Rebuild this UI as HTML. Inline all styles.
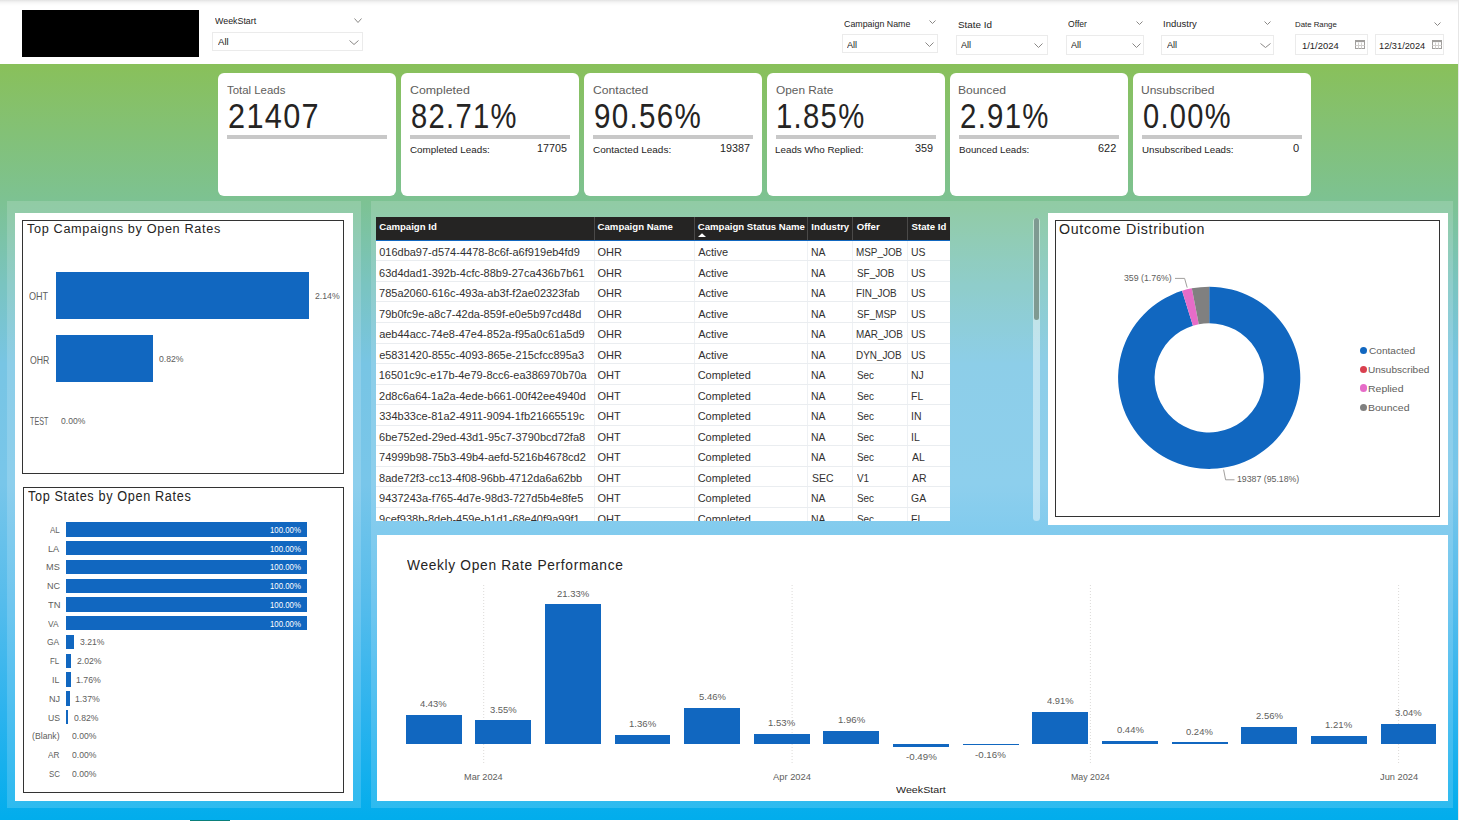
<!DOCTYPE html><html><head><meta charset="utf-8"><style>
*{margin:0;padding:0;box-sizing:border-box}
html,body{width:1459px;height:821px;overflow:hidden;background:#fff}
body{position:relative;font-family:"Liberation Sans",sans-serif;color:#252423}
div,svg{position:absolute}
.t{white-space:nowrap;line-height:1;transform-origin:0 0}
</style></head><body>
<div style="left:0.00px;top:0.00px;width:1459.00px;height:64.00px;background:#fff"></div>
<div style="left:0.00px;top:0.00px;width:1459.00px;height:6.00px;background:linear-gradient(#e2e2e2 0px,#f3f3f3 2px,#fbfbfb 4px,#fff 6px)"></div>
<div style="left:0.00px;top:64.00px;width:1457.60px;height:755.70px;background:linear-gradient(180deg,#89c05a 0px,#7dc292 136px,#7ac4c0 220px,#78c5e4 300px,#78c6ea 420px,#55bcec 540px,#2cb3ee 650px,#02adec 755px)"></div>
<div style="left:1457.60px;top:0.00px;width:1.40px;height:821.00px;background:#e6e6e6"></div>
<div style="left:0.00px;top:819.70px;width:1459.00px;height:1.30px;background:#fff"></div>
<div style="left:190.00px;top:819.70px;width:40.00px;height:1.30px;background:#0a7f7a"></div>
<div style="left:22.00px;top:10.00px;width:177.00px;height:47.00px;background:#000"></div>
<div class="t" style="left:215.16px;top:17.22px;font-size:9.30px;color:#252423;transform:scaleX(0.9535);">WeekStart</div>
<svg style="left:353.5px;top:18px" width="8" height="5" viewBox="0 0 8 5"><polyline points="0.5,0.5 4.0,4.5 7.5,0.5" fill="none" stroke="#8a8886" stroke-width="1"/></svg>
<div style="left:212.40px;top:32.00px;width:151.00px;height:19.40px;border:1px solid #ebebeb;background:#fff"></div>
<div class="t" style="left:217.68px;top:38.49px;font-size:8.87px;color:#252423;transform:scaleX(1.0819);">All</div>
<svg style="left:349px;top:40px" width="10" height="5" viewBox="0 0 10 5"><polyline points="0.5,0.5 5.0,4.5 9.5,0.5" fill="none" stroke="#8a8886" stroke-width="1"/></svg>
<div class="t" style="left:843.55px;top:19.95px;font-size:9.16px;color:#252423;transform:scaleX(0.9656);">Campaign Name</div>
<svg style="left:929px;top:20px" width="7" height="4" viewBox="0 0 7 4"><polyline points="0.5,0.5 3.5,3.5 6.5,0.5" fill="none" stroke="#8a8886" stroke-width="1"/></svg>
<div style="left:841.50px;top:34.00px;width:96.00px;height:19.20px;border:1px solid #ebebeb;background:#fff"></div>
<div class="t" style="left:846.98px;top:40.66px;font-size:8.43px;color:#252423;transform:scaleX(1.0810);">All</div>
<svg style="left:924.5px;top:42px" width="9" height="5" viewBox="0 0 9 5"><polyline points="0.5,0.5 4.5,4.5 8.5,0.5" fill="none" stroke="#8a8886" stroke-width="1"/></svg>
<div class="t" style="left:957.95px;top:21.06px;font-size:8.43px;color:#252423;transform:scaleX(1.1731);">State Id</div>
<div style="left:955.80px;top:34.70px;width:92.00px;height:20.00px;border:1px solid #ebebeb;background:#fff"></div>
<div class="t" style="left:960.68px;top:40.96px;font-size:8.43px;color:#252423;transform:scaleX(1.0810);">All</div>
<svg style="left:1034px;top:42.5px" width="9" height="5" viewBox="0 0 9 5"><polyline points="0.5,0.5 4.5,4.5 8.5,0.5" fill="none" stroke="#8a8886" stroke-width="1"/></svg>
<div class="t" style="left:1067.59px;top:21.11px;font-size:8.14px;color:#252423;transform:scaleX(1.0529);">Offer</div>
<svg style="left:1135.6px;top:21px" width="7" height="4" viewBox="0 0 7 4"><polyline points="0.5,0.5 3.5,3.5 6.5,0.5" fill="none" stroke="#8a8886" stroke-width="1"/></svg>
<div style="left:1065.90px;top:35.40px;width:78.10px;height:19.30px;border:1px solid #ebebeb;background:#fff"></div>
<div class="t" style="left:1070.78px;top:40.96px;font-size:8.43px;color:#252423;transform:scaleX(1.0810);">All</div>
<svg style="left:1131.7px;top:42.5px" width="9" height="5" viewBox="0 0 9 5"><polyline points="0.5,0.5 4.5,4.5 8.5,0.5" fill="none" stroke="#8a8886" stroke-width="1"/></svg>
<div class="t" style="left:1163.12px;top:21.11px;font-size:8.14px;color:#252423;transform:scaleX(1.1708);">Industry</div>
<svg style="left:1264.3px;top:21px" width="7" height="4" viewBox="0 0 7 4"><polyline points="0.5,0.5 3.5,3.5 6.5,0.5" fill="none" stroke="#8a8886" stroke-width="1"/></svg>
<div style="left:1161.00px;top:35.40px;width:112.60px;height:19.30px;border:1px solid #ebebeb;background:#fff"></div>
<div class="t" style="left:1166.88px;top:40.96px;font-size:8.43px;color:#252423;transform:scaleX(1.0810);">All</div>
<svg style="left:1260px;top:42.5px" width="11" height="5" viewBox="0 0 11 5"><polyline points="0.5,0.5 5.5,4.5 10.5,0.5" fill="none" stroke="#8a8886" stroke-width="1"/></svg>
<div class="t" style="left:1294.86px;top:21.23px;font-size:7.99px;color:#252423;transform:scaleX(0.9795);">Date Range</div>
<svg style="left:1434px;top:22px" width="7" height="4" viewBox="0 0 7 4"><polyline points="0.5,0.5 3.5,3.5 6.5,0.5" fill="none" stroke="#8a8886" stroke-width="1"/></svg>
<div style="left:1294.80px;top:33.90px;width:73.10px;height:21.40px;border:1px solid #ebebeb;background:#fff"></div>
<div style="left:1375.00px;top:33.90px;width:69.20px;height:21.40px;border:1px solid #ebebeb;background:#fff"></div>
<div class="t" style="left:1301.58px;top:40.85px;font-size:9.74px;color:#252423;transform:scaleX(0.9680);">1/1/2024</div>
<div class="t" style="left:1379.10px;top:40.85px;font-size:9.74px;color:#252423;transform:scaleX(0.9494);">12/31/2024</div>
<svg style="left:1354.5px;top:40px" width="10" height="9" viewBox="0 0 10 9"><rect x="0.5" y="0.5" width="9" height="8" fill="none" stroke="#a19f9d" stroke-width="1"/><rect x="0.5" y="0.5" width="9" height="1.6" fill="#a19f9d"/><line x1="3.5" y1="2.5" x2="3.5" y2="8.5" stroke="#d2d0ce"/><line x1="6.5" y1="2.5" x2="6.5" y2="8.5" stroke="#d2d0ce"/><line x1="0.5" y1="5.5" x2="9.5" y2="5.5" stroke="#d2d0ce"/></svg>
<svg style="left:1432.3px;top:40px" width="10" height="9" viewBox="0 0 10 9"><rect x="0.5" y="0.5" width="9" height="8" fill="none" stroke="#a19f9d" stroke-width="1"/><rect x="0.5" y="0.5" width="9" height="1.6" fill="#a19f9d"/><line x1="3.5" y1="2.5" x2="3.5" y2="8.5" stroke="#d2d0ce"/><line x1="6.5" y1="2.5" x2="6.5" y2="8.5" stroke="#d2d0ce"/><line x1="0.5" y1="5.5" x2="9.5" y2="5.5" stroke="#d2d0ce"/></svg>
<div style="left:218.00px;top:73.00px;width:177.50px;height:122.50px;background:#fff;border-radius:6px"></div>
<div class="t" style="left:227.04px;top:83.73px;font-size:11.77px;color:#605e5c;transform:scaleX(0.9699);">Total Leads</div>
<div class="t" style="left:227.76px;top:99.26px;font-size:34.30px;color:#252423;transform:scaleX(0.8945);letter-spacing:1.5px;">21407</div>
<div style="left:227.00px;top:135.00px;width:160.00px;height:4.00px;background:#c8c8c8"></div>
<div style="left:401.00px;top:73.00px;width:177.50px;height:122.50px;background:#fff;border-radius:6px"></div>
<div class="t" style="left:409.67px;top:83.73px;font-size:11.77px;color:#605e5c;transform:scaleX(1.0508);">Completed</div>
<div class="t" style="left:411.03px;top:99.26px;font-size:34.30px;color:#252423;transform:scaleX(0.8520);letter-spacing:1.5px;">82.71%</div>
<div style="left:410.00px;top:135.00px;width:160.00px;height:4.00px;background:#c8c8c8"></div>
<div class="t" style="left:409.80px;top:145.89px;font-size:8.87px;color:#252423;transform:scaleX(1.1103);">Completed Leads:</div>
<div class="t" style="left:537.08px;top:143.64px;font-size:10.47px;color:#252423;transform:scaleX(1.0264);">17705</div>
<div style="left:584.00px;top:73.00px;width:177.50px;height:122.50px;background:#fff;border-radius:6px"></div>
<div class="t" style="left:592.68px;top:83.73px;font-size:11.77px;color:#605e5c;transform:scaleX(1.0323);">Contacted</div>
<div class="t" style="left:593.91px;top:99.26px;font-size:34.30px;color:#252423;transform:scaleX(0.8636);letter-spacing:1.5px;">90.56%</div>
<div style="left:593.00px;top:135.00px;width:160.00px;height:4.00px;background:#c8c8c8"></div>
<div class="t" style="left:592.79px;top:145.89px;font-size:8.87px;color:#252423;transform:scaleX(1.1254);">Contacted Leads:</div>
<div class="t" style="left:720.08px;top:143.64px;font-size:10.47px;color:#252423;transform:scaleX(1.0296);">19387</div>
<div style="left:767.00px;top:73.00px;width:177.50px;height:122.50px;background:#fff;border-radius:6px"></div>
<div class="t" style="left:775.74px;top:83.73px;font-size:11.77px;color:#605e5c;transform:scaleX(1.0079);">Open Rate</div>
<div class="t" style="left:776.07px;top:99.26px;font-size:34.30px;color:#252423;transform:scaleX(0.8549);letter-spacing:1.5px;">1.85%</div>
<div style="left:776.00px;top:135.00px;width:160.00px;height:4.00px;background:#c8c8c8"></div>
<div class="t" style="left:775.49px;top:145.89px;font-size:8.87px;color:#252423;transform:scaleX(1.1085);">Leads Who Replied:</div>
<div class="t" style="left:914.89px;top:143.64px;font-size:10.47px;color:#252423;transform:scaleX(1.0382);">359</div>
<div style="left:950.00px;top:73.00px;width:177.50px;height:122.50px;background:#fff;border-radius:6px"></div>
<div class="t" style="left:958.30px;top:83.73px;font-size:11.77px;color:#605e5c;transform:scaleX(1.0323);">Bounced</div>
<div class="t" style="left:959.82px;top:99.26px;font-size:34.30px;color:#252423;transform:scaleX(0.8573);letter-spacing:1.5px;">2.91%</div>
<div style="left:959.00px;top:135.00px;width:160.00px;height:4.00px;background:#c8c8c8"></div>
<div class="t" style="left:958.50px;top:145.89px;font-size:8.87px;color:#252423;transform:scaleX(1.0967);">Bounced Leads:</div>
<div class="t" style="left:1097.85px;top:143.64px;font-size:10.47px;color:#252423;transform:scaleX(1.0425);">622</div>
<div style="left:1133.00px;top:73.00px;width:177.50px;height:122.50px;background:#fff;border-radius:6px"></div>
<div class="t" style="left:1141.37px;top:83.73px;font-size:11.77px;color:#605e5c;transform:scaleX(1.0211);">Unsubscribed</div>
<div class="t" style="left:1143.16px;top:99.26px;font-size:34.30px;color:#252423;transform:scaleX(0.8481);letter-spacing:1.5px;">0.00%</div>
<div style="left:1142.00px;top:135.00px;width:160.00px;height:4.00px;background:#c8c8c8"></div>
<div class="t" style="left:1141.55px;top:145.89px;font-size:8.87px;color:#252423;transform:scaleX(1.1002);">Unsubscribed Leads:</div>
<div class="t" style="left:1292.77px;top:143.64px;font-size:10.47px;color:#252423;transform:scaleX(1.0594);">0</div>
<div style="left:7.00px;top:200.70px;width:354.00px;height:607.30px;background:rgba(255,255,255,0.16)"></div>
<div style="left:15.00px;top:212.60px;width:338.00px;height:588.10px;background:#fff"></div>
<div style="left:370.70px;top:200.70px;width:677.10px;height:326.30px;background:rgba(255,255,255,0.16)"></div>
<div style="left:1047.80px;top:200.70px;width:405.20px;height:326.30px;background:rgba(255,255,255,0.16)"></div>
<div style="left:1047.80px;top:212.80px;width:400.50px;height:312.00px;background:#fff"></div>
<div style="left:370.70px;top:527.00px;width:1082.50px;height:281.00px;background:rgba(255,255,255,0.16)"></div>
<div style="left:376.90px;top:534.70px;width:1071.40px;height:266.00px;background:#fff"></div>
<div style="left:22.00px;top:219.90px;width:322.00px;height:254.10px;border:1px solid #333"></div>
<div class="t" style="left:26.81px;top:222.33px;font-size:13.66px;color:#252423;transform:scaleX(0.9292);letter-spacing:0.7px;">Top Campaigns by Open Rates</div>
<div style="left:55.50px;top:272.30px;width:253.70px;height:47.20px;background:#1167c0"></div>
<div style="left:55.50px;top:335.00px;width:97.30px;height:46.60px;background:#1167c0"></div>
<div class="t" style="left:29.37px;top:291.64px;font-size:10.47px;color:#605e5c;transform:scaleX(0.8663);">OHT</div>
<div class="t" style="left:29.59px;top:354.52px;font-size:10.61px;color:#605e5c;transform:scaleX(0.8192);">OHR</div>
<div class="t" style="left:30.14px;top:416.02px;font-size:11.19px;color:#605e5c;transform:scaleX(0.6407);">TEST</div>
<div class="t" style="left:315.26px;top:290.73px;font-size:9.88px;color:#605e5c;transform:scaleX(0.8795);">2.14%</div>
<div class="t" style="left:159.46px;top:353.73px;font-size:9.88px;color:#605e5c;transform:scaleX(0.8759);">0.82%</div>
<div class="t" style="left:61.26px;top:415.73px;font-size:9.88px;color:#605e5c;transform:scaleX(0.8686);">0.00%</div>
<div style="left:23.10px;top:487.20px;width:321.20px;height:305.60px;border:1px solid #333"></div>
<div class="t" style="left:27.92px;top:489.51px;font-size:13.81px;color:#252423;transform:scaleX(0.9185);letter-spacing:0.7px;">Top States by Open Rates</div>
<div style="left:66.30px;top:522.20px;width:240.60px;height:14.40px;background:#1167c0"></div>
<div class="t" style="left:49.78px;top:524.75px;font-size:9.45px;color:#605e5c;transform:scaleX(0.8464);">AL</div>
<div class="t" style="left:270.10px;top:524.75px;font-size:9.45px;color:#fff;transform:scaleX(0.8278);">100.00%</div>
<div style="left:66.30px;top:540.98px;width:240.60px;height:14.40px;background:#1167c0"></div>
<div class="t" style="left:48.04px;top:543.53px;font-size:9.45px;color:#605e5c;transform:scaleX(0.9756);">LA</div>
<div class="t" style="left:270.10px;top:543.53px;font-size:9.45px;color:#fff;transform:scaleX(0.8278);">100.00%</div>
<div style="left:66.30px;top:559.76px;width:240.60px;height:14.40px;background:#1167c0"></div>
<div class="t" style="left:45.95px;top:562.31px;font-size:9.45px;color:#605e5c;transform:scaleX(0.9720);">MS</div>
<div class="t" style="left:270.10px;top:562.31px;font-size:9.45px;color:#fff;transform:scaleX(0.8278);">100.00%</div>
<div style="left:66.30px;top:578.54px;width:240.60px;height:14.40px;background:#1167c0"></div>
<div class="t" style="left:46.56px;top:581.09px;font-size:9.45px;color:#605e5c;transform:scaleX(0.9592);">NC</div>
<div class="t" style="left:270.10px;top:581.09px;font-size:9.45px;color:#fff;transform:scaleX(0.8278);">100.00%</div>
<div style="left:66.30px;top:597.32px;width:240.60px;height:14.40px;background:#1167c0"></div>
<div class="t" style="left:47.59px;top:599.87px;font-size:9.45px;color:#605e5c;transform:scaleX(0.9904);">TN</div>
<div class="t" style="left:270.10px;top:599.87px;font-size:9.45px;color:#fff;transform:scaleX(0.8278);">100.00%</div>
<div style="left:66.30px;top:616.10px;width:240.60px;height:14.40px;background:#1167c0"></div>
<div class="t" style="left:48.16px;top:618.65px;font-size:9.45px;color:#605e5c;transform:scaleX(0.8850);">VA</div>
<div class="t" style="left:270.10px;top:618.65px;font-size:9.45px;color:#fff;transform:scaleX(0.8278);">100.00%</div>
<div style="left:66.30px;top:634.88px;width:7.72px;height:14.40px;background:#1167c0"></div>
<div class="t" style="left:47.07px;top:637.43px;font-size:9.45px;color:#605e5c;transform:scaleX(0.8969);">GA</div>
<div class="t" style="left:79.70px;top:637.43px;font-size:9.45px;color:#605e5c;transform:scaleX(0.9122);">3.21%</div>
<div style="left:66.30px;top:653.66px;width:4.86px;height:14.40px;background:#1167c0"></div>
<div class="t" style="left:50.35px;top:656.21px;font-size:9.45px;color:#605e5c;transform:scaleX(0.8353);">FL</div>
<div class="t" style="left:76.72px;top:656.21px;font-size:9.45px;color:#605e5c;transform:scaleX(0.9162);">2.02%</div>
<div style="left:66.30px;top:672.44px;width:4.23px;height:14.40px;background:#1167c0"></div>
<div class="t" style="left:52.29px;top:674.99px;font-size:9.45px;color:#605e5c;transform:scaleX(0.9263);">IL</div>
<div class="t" style="left:75.87px;top:674.99px;font-size:9.45px;color:#605e5c;transform:scaleX(0.9249);">1.76%</div>
<div style="left:66.30px;top:691.22px;width:3.30px;height:14.40px;background:#1167c0"></div>
<div class="t" style="left:48.85px;top:693.77px;font-size:9.45px;color:#605e5c;transform:scaleX(0.9632);">NJ</div>
<div class="t" style="left:74.93px;top:693.77px;font-size:9.45px;color:#605e5c;transform:scaleX(0.9249);">1.37%</div>
<div style="left:66.30px;top:710.00px;width:2.20px;height:14.40px;background:#1167c0"></div>
<div class="t" style="left:47.63px;top:712.55px;font-size:9.45px;color:#605e5c;transform:scaleX(0.9196);">US</div>
<div class="t" style="left:74.16px;top:712.55px;font-size:9.45px;color:#605e5c;transform:scaleX(0.9125);">0.82%</div>
<div class="t" style="left:32.26px;top:731.33px;font-size:9.45px;color:#605e5c;transform:scaleX(0.9216);">(Blank)</div>
<div class="t" style="left:71.96px;top:731.33px;font-size:9.45px;color:#605e5c;transform:scaleX(0.9125);">0.00%</div>
<div class="t" style="left:48.28px;top:750.11px;font-size:9.45px;color:#605e5c;transform:scaleX(0.8684);">AR</div>
<div class="t" style="left:71.96px;top:750.11px;font-size:9.45px;color:#605e5c;transform:scaleX(0.9125);">0.00%</div>
<div class="t" style="left:48.64px;top:768.89px;font-size:9.45px;color:#605e5c;transform:scaleX(0.8350);">SC</div>
<div class="t" style="left:71.96px;top:768.89px;font-size:9.45px;color:#605e5c;transform:scaleX(0.9125);">0.00%</div>
<div style="left:375.80px;top:216.90px;width:574.50px;height:22.80px;background:#252423"></div>
<div style="left:375.80px;top:239.70px;width:574.50px;height:1.20px;background:#1167c0"></div>
<div style="left:375.80px;top:240.90px;width:574.50px;height:280.20px;background:#fff"></div>
<div style="left:594.20px;top:216.90px;width:1.00px;height:22.80px;background:#4a4948"></div>
<div style="left:594.20px;top:240.90px;width:1.00px;height:280.20px;background:#eef1f4"></div>
<div style="left:694.40px;top:216.90px;width:1.00px;height:22.80px;background:#4a4948"></div>
<div style="left:694.40px;top:240.90px;width:1.00px;height:280.20px;background:#eef1f4"></div>
<div style="left:807.20px;top:216.90px;width:1.00px;height:22.80px;background:#4a4948"></div>
<div style="left:807.20px;top:240.90px;width:1.00px;height:280.20px;background:#eef1f4"></div>
<div style="left:852.30px;top:216.90px;width:1.00px;height:22.80px;background:#4a4948"></div>
<div style="left:852.30px;top:240.90px;width:1.00px;height:280.20px;background:#eef1f4"></div>
<div style="left:907.10px;top:216.90px;width:1.00px;height:22.80px;background:#4a4948"></div>
<div style="left:907.10px;top:240.90px;width:1.00px;height:280.20px;background:#eef1f4"></div>
<div class="t" style="left:379.21px;top:221.87px;font-size:9.60px;color:#fff;font-weight:bold;">Campaign Id</div>
<div class="t" style="left:597.61px;top:221.87px;font-size:9.60px;color:#fff;font-weight:bold;">Campaign Name</div>
<div class="t" style="left:697.81px;top:221.87px;font-size:9.60px;color:#fff;font-weight:bold;">Campaign Status Name</div>
<div class="t" style="left:811.36px;top:221.87px;font-size:9.60px;color:#fff;font-weight:bold;">Industry</div>
<div class="t" style="left:856.71px;top:221.87px;font-size:9.60px;color:#fff;font-weight:bold;">Offer</div>
<div class="t" style="left:911.62px;top:221.87px;font-size:9.60px;color:#fff;font-weight:bold;">State Id</div>
<svg style="left:698px;top:233px" width="8" height="4" viewBox="0 0 8 4"><polygon points="0,4 4,0.3 8,4" fill="#fff"/></svg>
<div style="left:375.80px;top:260.40px;width:574.50px;height:1.00px;background:#eaedf0"></div>
<div style="left:375.80px;top:280.93px;width:574.50px;height:1.00px;background:#eaedf0"></div>
<div style="left:375.80px;top:301.46px;width:574.50px;height:1.00px;background:#eaedf0"></div>
<div style="left:375.80px;top:321.99px;width:574.50px;height:1.00px;background:#eaedf0"></div>
<div style="left:375.80px;top:342.52px;width:574.50px;height:1.00px;background:#eaedf0"></div>
<div style="left:375.80px;top:363.05px;width:574.50px;height:1.00px;background:#eaedf0"></div>
<div style="left:375.80px;top:383.58px;width:574.50px;height:1.00px;background:#eaedf0"></div>
<div style="left:375.80px;top:404.11px;width:574.50px;height:1.00px;background:#eaedf0"></div>
<div style="left:375.80px;top:424.64px;width:574.50px;height:1.00px;background:#eaedf0"></div>
<div style="left:375.80px;top:445.17px;width:574.50px;height:1.00px;background:#eaedf0"></div>
<div style="left:375.80px;top:465.70px;width:574.50px;height:1.00px;background:#eaedf0"></div>
<div style="left:375.80px;top:486.23px;width:574.50px;height:1.00px;background:#eaedf0"></div>
<div style="left:375.80px;top:506.76px;width:574.50px;height:1.00px;background:#eaedf0"></div>
<div style="left:375.8px;top:240.9px;width:574.5px;height:280.2px;overflow:hidden">
<div class="t" style="left:3.37px;top:6.19px;font-size:11px;color:#323130;">016dba97-d574-4478-8c6f-a6f919eb4fd9</div>
<div class="t" style="left:221.68px;top:6.19px;font-size:11px;color:#323130;">OHR</div>
<div class="t" style="left:322.38px;top:6.19px;font-size:11px;color:#323130;">Active</div>
<div class="t" style="left:435.34px;top:6.19px;font-size:11px;color:#323130;transform:scaleX(0.95);">NA</div>
<div class="t" style="left:480.49px;top:6.19px;font-size:11px;color:#323130;transform:scaleX(0.9);">MSP_JOB</div>
<div class="t" style="left:535.29px;top:6.19px;font-size:11px;color:#323130;transform:scaleX(0.95);">US</div>
<div class="t" style="left:3.24px;top:26.72px;font-size:11px;color:#323130;">63d4dad1-392b-4cfc-88b9-27ca436b7b61</div>
<div class="t" style="left:221.68px;top:26.72px;font-size:11px;color:#323130;">OHR</div>
<div class="t" style="left:322.38px;top:26.72px;font-size:11px;color:#323130;">Active</div>
<div class="t" style="left:435.34px;top:26.72px;font-size:11px;color:#323130;transform:scaleX(0.95);">NA</div>
<div class="t" style="left:480.85px;top:26.72px;font-size:11px;color:#323130;transform:scaleX(0.9);">SF_JOB</div>
<div class="t" style="left:535.29px;top:26.72px;font-size:11px;color:#323130;transform:scaleX(0.95);">US</div>
<div class="t" style="left:3.24px;top:47.25px;font-size:11px;color:#323130;">785a2060-616c-493a-ab3f-f2ae02323fab</div>
<div class="t" style="left:221.68px;top:47.25px;font-size:11px;color:#323130;">OHR</div>
<div class="t" style="left:322.38px;top:47.25px;font-size:11px;color:#323130;">Active</div>
<div class="t" style="left:435.34px;top:47.25px;font-size:11px;color:#323130;transform:scaleX(0.95);">NA</div>
<div class="t" style="left:480.49px;top:47.25px;font-size:11px;color:#323130;transform:scaleX(0.9);">FIN_JOB</div>
<div class="t" style="left:535.29px;top:47.25px;font-size:11px;color:#323130;transform:scaleX(0.95);">US</div>
<div class="t" style="left:3.24px;top:67.78px;font-size:11px;color:#323130;">79b0fc9e-a8c7-42da-859f-e0e5b97cd48d</div>
<div class="t" style="left:221.68px;top:67.78px;font-size:11px;color:#323130;">OHR</div>
<div class="t" style="left:322.38px;top:67.78px;font-size:11px;color:#323130;">Active</div>
<div class="t" style="left:435.34px;top:67.78px;font-size:11px;color:#323130;transform:scaleX(0.95);">NA</div>
<div class="t" style="left:480.85px;top:67.78px;font-size:11px;color:#323130;transform:scaleX(0.9);">SF_MSP</div>
<div class="t" style="left:535.29px;top:67.78px;font-size:11px;color:#323130;transform:scaleX(0.95);">US</div>
<div class="t" style="left:3.33px;top:88.31px;font-size:11px;color:#323130;">aeb44acc-74e8-47e4-852a-f95a0c61a5d9</div>
<div class="t" style="left:221.68px;top:88.31px;font-size:11px;color:#323130;">OHR</div>
<div class="t" style="left:322.38px;top:88.31px;font-size:11px;color:#323130;">Active</div>
<div class="t" style="left:435.34px;top:88.31px;font-size:11px;color:#323130;transform:scaleX(0.95);">NA</div>
<div class="t" style="left:480.49px;top:88.31px;font-size:11px;color:#323130;transform:scaleX(0.9);">MAR_JOB</div>
<div class="t" style="left:535.29px;top:88.31px;font-size:11px;color:#323130;transform:scaleX(0.95);">US</div>
<div class="t" style="left:3.33px;top:108.84px;font-size:11px;color:#323130;">e5831420-855c-4093-865e-215cfcc895a3</div>
<div class="t" style="left:221.68px;top:108.84px;font-size:11px;color:#323130;">OHR</div>
<div class="t" style="left:322.38px;top:108.84px;font-size:11px;color:#323130;">Active</div>
<div class="t" style="left:435.34px;top:108.84px;font-size:11px;color:#323130;transform:scaleX(0.95);">NA</div>
<div class="t" style="left:480.49px;top:108.84px;font-size:11px;color:#323130;transform:scaleX(0.9);">DYN_JOB</div>
<div class="t" style="left:535.29px;top:108.84px;font-size:11px;color:#323130;transform:scaleX(0.95);">US</div>
<div class="t" style="left:2.96px;top:129.37px;font-size:11px;color:#323130;">16501c9c-e17b-4e79-8cc6-ea386970b70a</div>
<div class="t" style="left:221.68px;top:129.37px;font-size:11px;color:#323130;">OHT</div>
<div class="t" style="left:321.84px;top:129.37px;font-size:11px;color:#323130;">Completed</div>
<div class="t" style="left:435.34px;top:129.37px;font-size:11px;color:#323130;transform:scaleX(0.95);">NA</div>
<div class="t" style="left:480.85px;top:129.37px;font-size:11px;color:#323130;transform:scaleX(0.9);">Sec</div>
<div class="t" style="left:535.24px;top:129.37px;font-size:11px;color:#323130;transform:scaleX(0.95);">NJ</div>
<div class="t" style="left:3.25px;top:149.90px;font-size:11px;color:#323130;">2d8c6a64-1a2a-4ede-b661-00f42ee4940d</div>
<div class="t" style="left:221.68px;top:149.90px;font-size:11px;color:#323130;">OHT</div>
<div class="t" style="left:321.84px;top:149.90px;font-size:11px;color:#323130;">Completed</div>
<div class="t" style="left:435.34px;top:149.90px;font-size:11px;color:#323130;transform:scaleX(0.95);">NA</div>
<div class="t" style="left:480.85px;top:149.90px;font-size:11px;color:#323130;transform:scaleX(0.9);">Sec</div>
<div class="t" style="left:535.24px;top:149.90px;font-size:11px;color:#323130;transform:scaleX(0.95);">FL</div>
<div class="t" style="left:3.38px;top:170.43px;font-size:11px;color:#323130;">334b33ce-81a2-4911-9094-1fb21665519c</div>
<div class="t" style="left:221.68px;top:170.43px;font-size:11px;color:#323130;">OHT</div>
<div class="t" style="left:321.84px;top:170.43px;font-size:11px;color:#323130;">Completed</div>
<div class="t" style="left:435.34px;top:170.43px;font-size:11px;color:#323130;transform:scaleX(0.95);">NA</div>
<div class="t" style="left:480.85px;top:170.43px;font-size:11px;color:#323130;transform:scaleX(0.9);">Sec</div>
<div class="t" style="left:535.14px;top:170.43px;font-size:11px;color:#323130;transform:scaleX(0.95);">IN</div>
<div class="t" style="left:3.24px;top:190.96px;font-size:11px;color:#323130;">6be752ed-29ed-43d1-95c7-3790bcd72fa8</div>
<div class="t" style="left:221.68px;top:190.96px;font-size:11px;color:#323130;">OHT</div>
<div class="t" style="left:321.84px;top:190.96px;font-size:11px;color:#323130;">Completed</div>
<div class="t" style="left:435.34px;top:190.96px;font-size:11px;color:#323130;transform:scaleX(0.95);">NA</div>
<div class="t" style="left:480.85px;top:190.96px;font-size:11px;color:#323130;transform:scaleX(0.9);">Sec</div>
<div class="t" style="left:535.14px;top:190.96px;font-size:11px;color:#323130;transform:scaleX(0.95);">IL</div>
<div class="t" style="left:3.24px;top:211.49px;font-size:11px;color:#323130;">74999b98-75b3-49b4-aefd-5216b4678cd2</div>
<div class="t" style="left:221.68px;top:211.49px;font-size:11px;color:#323130;">OHT</div>
<div class="t" style="left:321.84px;top:211.49px;font-size:11px;color:#323130;">Completed</div>
<div class="t" style="left:435.34px;top:211.49px;font-size:11px;color:#323130;transform:scaleX(0.95);">NA</div>
<div class="t" style="left:480.85px;top:211.49px;font-size:11px;color:#323130;transform:scaleX(0.9);">Sec</div>
<div class="t" style="left:536.08px;top:211.49px;font-size:11px;color:#323130;transform:scaleX(0.95);">AL</div>
<div class="t" style="left:3.32px;top:232.02px;font-size:11px;color:#323130;">8ade72f3-cc13-4f08-96bb-4712da6a62bb</div>
<div class="t" style="left:221.68px;top:232.02px;font-size:11px;color:#323130;">OHT</div>
<div class="t" style="left:321.84px;top:232.02px;font-size:11px;color:#323130;">Completed</div>
<div class="t" style="left:435.73px;top:232.02px;font-size:11px;color:#323130;transform:scaleX(0.95);">SEC</div>
<div class="t" style="left:481.26px;top:232.02px;font-size:11px;color:#323130;transform:scaleX(0.9);">V1</div>
<div class="t" style="left:536.08px;top:232.02px;font-size:11px;color:#323130;transform:scaleX(0.95);">AR</div>
<div class="t" style="left:3.28px;top:252.55px;font-size:11px;color:#323130;">9437243a-f765-4d7e-98d3-727d5b4e8fe5</div>
<div class="t" style="left:221.68px;top:252.55px;font-size:11px;color:#323130;">OHT</div>
<div class="t" style="left:321.84px;top:252.55px;font-size:11px;color:#323130;">Completed</div>
<div class="t" style="left:435.34px;top:252.55px;font-size:11px;color:#323130;transform:scaleX(0.95);">NA</div>
<div class="t" style="left:480.85px;top:252.55px;font-size:11px;color:#323130;transform:scaleX(0.9);">Sec</div>
<div class="t" style="left:535.57px;top:252.55px;font-size:11px;color:#323130;transform:scaleX(0.95);">GA</div>
<div class="t" style="left:3.28px;top:273.08px;font-size:11px;color:#323130;">9cef938b-8deb-459e-b1d1-68e40f9a99f1</div>
<div class="t" style="left:221.68px;top:273.08px;font-size:11px;color:#323130;">OHT</div>
<div class="t" style="left:321.84px;top:273.08px;font-size:11px;color:#323130;">Completed</div>
<div class="t" style="left:435.34px;top:273.08px;font-size:11px;color:#323130;transform:scaleX(0.95);">NA</div>
<div class="t" style="left:480.85px;top:273.08px;font-size:11px;color:#323130;transform:scaleX(0.9);">Sec</div>
<div class="t" style="left:535.24px;top:273.08px;font-size:11px;color:#323130;transform:scaleX(0.95);">FL</div>
</div>
<div style="left:1032.90px;top:217.80px;width:6.90px;height:303.00px;background:rgba(255,255,255,0.45);border-radius:3.5px"></div>
<div style="left:1033.60px;top:217.80px;width:5.60px;height:102.60px;background:#7f9a92;border-radius:2.8px"></div>
<div style="left:1055.30px;top:220.10px;width:385.00px;height:297.00px;border:1px solid #333"></div>
<div class="t" style="left:1059.23px;top:222.45px;font-size:14.83px;color:#252423;transform:scaleX(0.9589);letter-spacing:0.7px;">Outcome Distribution</div>
<svg style="left:0;top:0" width="1459" height="821" viewBox="0 0 1459 821"><path d="M1209.20,286.70 A91.1,91.1 0 1 1 1182.05,290.84 L1192.93,325.68 A54.6,54.6 0 1 0 1209.20,323.20 Z" fill="#1167c0"/><path d="M1182.05,290.84 A91.1,91.1 0 0 1 1191.83,288.37 L1198.79,324.20 A54.6,54.6 0 0 0 1192.93,325.68 Z" fill="#e66cc8"/><path d="M1191.83,288.37 A91.1,91.1 0 0 1 1209.20,286.70 L1209.20,323.20 A54.6,54.6 0 0 0 1198.79,324.20 Z" fill="#808080"/><polyline points="1175,278.4 1184.6,278.4 1187.2,287.6" fill="none" stroke="#a19f9d" stroke-width="1"/><polyline points="1223.6,469.6 1225.6,479.8 1234.5,479.8" fill="none" stroke="#a19f9d" stroke-width="1"/></svg>
<div class="t" style="left:1124.47px;top:273.72px;font-size:9.30px;color:#605e5c;transform:scaleX(0.9428);">359 (1.76%)</div>
<div class="t" style="left:1236.53px;top:475.32px;font-size:9.30px;color:#605e5c;transform:scaleX(0.9413);">19387 (95.18%)</div>
<div style="left:1359.70px;top:346.70px;width:7.2px;height:7.2px;border-radius:50%;background:#1167c0"></div>
<div class="t" style="left:1368.69px;top:345.80px;font-size:9.45px;color:#605e5c;transform:scaleX(1.0720);">Contacted</div>
<div style="left:1359.70px;top:365.60px;width:7.2px;height:7.2px;border-radius:50%;background:#d9404f"></div>
<div class="t" style="left:1368.42px;top:364.70px;font-size:9.45px;color:#605e5c;transform:scaleX(1.0633);">Unsubscribed</div>
<div style="left:1359.70px;top:384.40px;width:7.2px;height:7.2px;border-radius:50%;background:#e66cc8"></div>
<div class="t" style="left:1368.34px;top:383.50px;font-size:9.45px;color:#605e5c;transform:scaleX(1.1091);">Replied</div>
<div style="left:1359.70px;top:403.90px;width:7.2px;height:7.2px;border-radius:50%;background:#808080"></div>
<div class="t" style="left:1368.34px;top:403.00px;font-size:9.45px;color:#605e5c;transform:scaleX(1.1138);">Bounced</div>
<div class="t" style="left:406.54px;top:557.89px;font-size:14.53px;color:#252423;transform:scaleX(0.9485);letter-spacing:0.7px;">Weekly Open Rate Performance</div>
<svg style="left:0;top:0" width="1459" height="821" viewBox="0 0 1459 821"><line x1="483.7" y1="585" x2="483.7" y2="765" stroke="#dcdad8" stroke-width="1" stroke-dasharray="1,2"/><line x1="792.1" y1="585" x2="792.1" y2="765" stroke="#dcdad8" stroke-width="1" stroke-dasharray="1,2"/><line x1="1090.4" y1="585" x2="1090.4" y2="765" stroke="#dcdad8" stroke-width="1" stroke-dasharray="1,2"/><line x1="1398.6" y1="585" x2="1398.6" y2="765" stroke="#dcdad8" stroke-width="1" stroke-dasharray="1,2"/></svg>
<div style="left:405.70px;top:714.71px;width:55.90px;height:28.99px;background:#1167c0"></div>
<div class="t" style="left:420.38px;top:700.18px;font-size:9.01px;color:#605e5c;transform:scaleX(1.0430);">4.43%</div>
<div style="left:475.33px;top:720.47px;width:55.90px;height:23.23px;background:#1167c0"></div>
<div class="t" style="left:489.87px;top:705.94px;font-size:9.01px;color:#605e5c;transform:scaleX(1.0487);">3.55%</div>
<div style="left:544.96px;top:604.10px;width:55.90px;height:139.60px;background:#1167c0"></div>
<div class="t" style="left:556.68px;top:589.57px;font-size:9.01px;color:#605e5c;transform:scaleX(1.0574);">21.33%</div>
<div style="left:614.59px;top:734.80px;width:55.90px;height:8.90px;background:#1167c0"></div>
<div class="t" style="left:628.76px;top:720.27px;font-size:9.01px;color:#605e5c;transform:scaleX(1.0634);">1.36%</div>
<div style="left:684.22px;top:707.96px;width:55.90px;height:35.74px;background:#1167c0"></div>
<div class="t" style="left:698.74px;top:693.43px;font-size:9.01px;color:#605e5c;transform:scaleX(1.0495);">5.46%</div>
<div style="left:753.85px;top:733.69px;width:55.90px;height:10.01px;background:#1167c0"></div>
<div class="t" style="left:768.02px;top:719.16px;font-size:9.01px;color:#605e5c;transform:scaleX(1.0634);">1.53%</div>
<div style="left:823.48px;top:730.87px;width:55.90px;height:12.83px;background:#1167c0"></div>
<div class="t" style="left:837.65px;top:716.34px;font-size:9.01px;color:#605e5c;transform:scaleX(1.0634);">1.96%</div>
<div style="left:893.11px;top:743.70px;width:55.90px;height:3.21px;background:#1167c0"></div>
<div class="t" style="left:905.63px;top:752.85px;font-size:9.16px;color:#605e5c;transform:scaleX(1.0608);">-0.49%</div>
<div style="left:962.74px;top:743.70px;width:55.90px;height:1.20px;background:#1167c0"></div>
<div class="t" style="left:975.26px;top:750.85px;font-size:9.16px;color:#605e5c;transform:scaleX(1.0608);">-0.16%</div>
<div style="left:1032.37px;top:711.56px;width:55.90px;height:32.14px;background:#1167c0"></div>
<div class="t" style="left:1047.05px;top:697.03px;font-size:9.01px;color:#605e5c;transform:scaleX(1.0430);">4.91%</div>
<div style="left:1102.00px;top:740.82px;width:55.90px;height:2.88px;background:#1167c0"></div>
<div class="t" style="left:1116.53px;top:726.29px;font-size:9.01px;color:#605e5c;transform:scaleX(1.0491);">0.44%</div>
<div style="left:1171.63px;top:742.13px;width:55.90px;height:1.57px;background:#1167c0"></div>
<div class="t" style="left:1186.16px;top:727.60px;font-size:9.01px;color:#605e5c;transform:scaleX(1.0491);">0.24%</div>
<div style="left:1241.26px;top:726.94px;width:55.90px;height:16.76px;background:#1167c0"></div>
<div class="t" style="left:1255.68px;top:712.41px;font-size:9.01px;color:#605e5c;transform:scaleX(1.0534);">2.56%</div>
<div style="left:1310.89px;top:735.78px;width:55.90px;height:7.92px;background:#1167c0"></div>
<div class="t" style="left:1325.06px;top:721.25px;font-size:9.01px;color:#605e5c;transform:scaleX(1.0634);">1.21%</div>
<div style="left:1380.52px;top:723.80px;width:55.90px;height:19.90px;background:#1167c0"></div>
<div class="t" style="left:1395.06px;top:709.27px;font-size:9.01px;color:#605e5c;transform:scaleX(1.0487);">3.04%</div>
<div class="t" style="left:464.10px;top:772.52px;font-size:8.72px;color:#605e5c;transform:scaleX(1.0510);">Mar 2024</div>
<div class="t" style="left:773.23px;top:772.52px;font-size:8.72px;color:#605e5c;transform:scaleX(1.0734);">Apr 2024</div>
<div class="t" style="left:1070.83px;top:772.52px;font-size:8.72px;color:#605e5c;transform:scaleX(1.0100);">May 2024</div>
<div class="t" style="left:1379.61px;top:772.52px;font-size:8.72px;color:#605e5c;transform:scaleX(1.0622);">Jun 2024</div>
<div class="t" style="left:896.20px;top:785.13px;font-size:9.88px;color:#252423;transform:scaleX(1.0843);">WeekStart</div>
</body></html>
